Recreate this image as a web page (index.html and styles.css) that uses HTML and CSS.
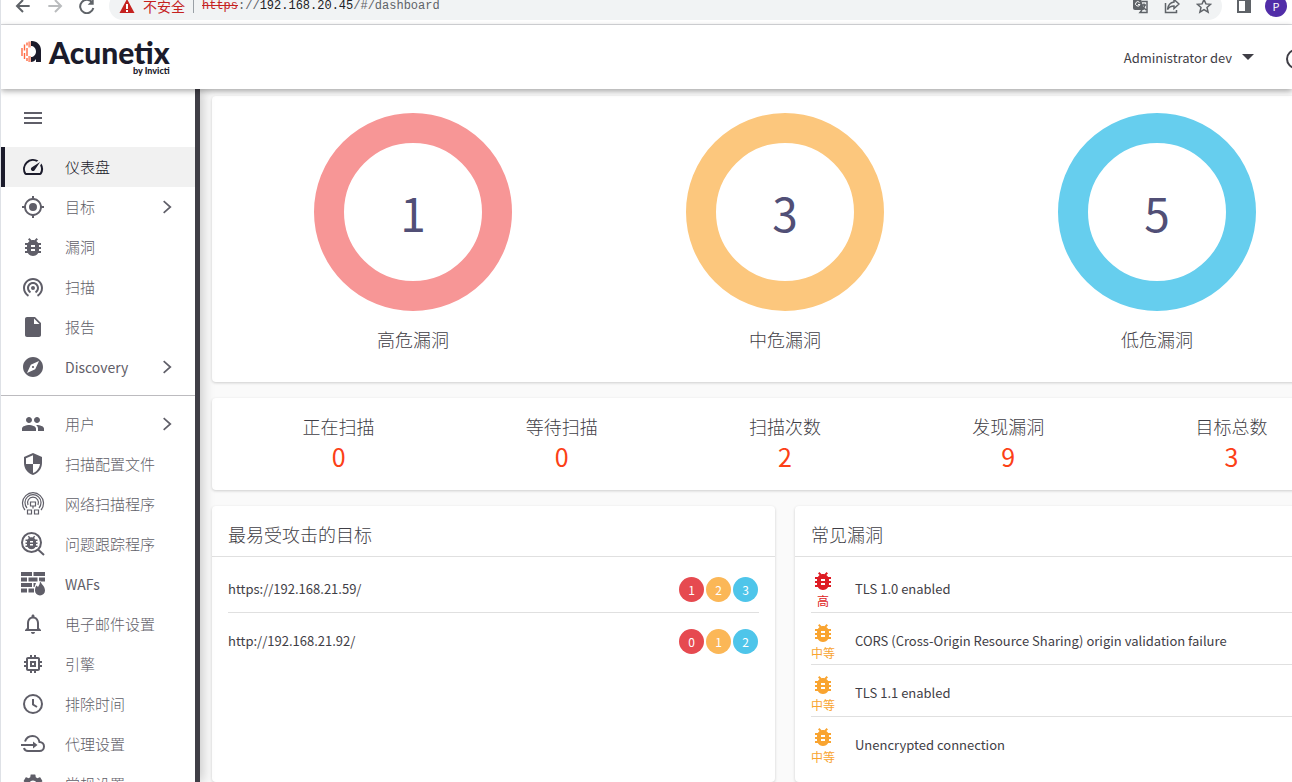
FILE: index.html
```html
<!DOCTYPE html>
<html lang="zh-CN">
<head>
    <meta charset="UTF-8">
    <meta name="viewport" content="width=device-width, initial-scale=1.0">
    <title>Acunetix</title>
    <link rel="stylesheet" href="styles.css">
</head>
<body>
    <!-- Browser toolbar -->
    <div class="browser-bar">
        <button class="browser-button" aria-label="后退"><svg viewBox="0 0 24 24"><path d="M22 12H4M12 3l-9 9 9 9"/></svg></button>
        <button class="browser-button disabled" aria-label="前进"><svg viewBox="0 0 24 24"><path d="M2 12h18M12 3l9 9-9 9"/></svg></button>
        <button class="browser-button" aria-label="刷新"><svg viewBox="0 0 24 24"><path d="M20 7a10 10 0 1 0 1.500 8"/><path class="solid" d="M22 1v9h-9z"/></svg></button>
        <div class="address">
            <svg class="warning" viewBox="0 0 16 16"><path d="M8 1l7.500 14H.5z"/><path class="mark" d="M8 6v5M8 12v2"/></svg>
            <span class="unsafe">不安全</span>
            <span class="url"><s>https</s>://<b>192.168.20.45</b>/#/dashboard</span>
            <button class="address-button" aria-label="翻译"><svg viewBox="0 0 16 16"><path class="solid" d="M1 1h8l3 11H3a2 2 0 0 1-2-2z"/><path d="M9.500 3.500H15v11H8l2-2.500M9.500 7H14M12 5.500V7M13 7c-.5 2-1.500 3-3 4M11 9l3 3"/><path class="letter" d="M7.500 4.500a2.200 2.200 0 1 0 .4 2H6"/></svg></button>
            <button class="address-button" aria-label="分享"><svg viewBox="0 0 16 16"><path d="M1.500 5v9.500h11V12M10 1.500l5 4.500-5 4.500V8c-3 0-5 1-6.500 3.500C4 7.500 6 4.500 10 4z"/></svg></button>
            <button class="address-button" aria-label="收藏"><svg viewBox="0 0 16 16"><path d="M8 1.500l1.900 4.400 4.700.4-3.600 3.100 1.100 4.700L8 11.600l-4.100 2.500L5 9.400 1.400 6.300l4.700-.4z"/></svg></button>
        </div>
        <button class="panel-button" aria-label="侧边栏"><svg viewBox="0 0 16 16"><path d="M2 2h12v12H2z"/><path class="solid" d="M9 2h5v12H9z"/></svg></button>
        <span class="avatar">P</span>
    </div>

    <!-- App header -->
    <header class="header">
        <a class="logo" href="#/dashboard">
            <svg class="logo-mark" viewBox="0 0 20 21">
                <path fill="#1b1b2b" d="M10 0h1c5 0 9 4 9 9v12h-5v-3c-1 2-3 3-5 3v-5c2.500 0 5-2 5-5.500S12.500 5 10 5z"/>
                <path stroke="#ff6a42" stroke-width="1.400" d="M1 7v8M3.500 3.500v6M3.500 12v6M6 1.500v3M6 7v8M6 17v3"/>
                <path stroke="#ff9a80" stroke-width="2.500" d="M8.500 .5v6M8.500 15v6"/>
            </svg>
            <span class="logo-text">
                <span class="logo-name">Acunetix</span>
                <span class="logo-by">by Invicti</span>
            </span>
        </a>
        <button class="user-menu">Administrator dev <span class="caret"></span></button>
        <button class="help" aria-label="帮助"><svg viewBox="0 0 24 24"><circle cx="12" cy="12" r="9"/><path d="M9 10a3 3 0 1 1 3 3v1M12 16v2"/></svg></button>
    </header>

    <div class="app">
        <!-- Sidebar -->
        <nav class="sidebar">
            <button class="menu-toggle" aria-label="菜单"><svg viewBox="0 0 24 24"><path d="M3 18h18v-2H3v2zm0-5h18v-2H3v2zm0-7v2h18V6H3z"/></svg></button>
            <a class="nav-item active" href="#/dashboard">
                <svg viewBox="0 0 24 24"><path d="M20.380 8.570l-1.230 1.850a8 8 0 0 1-.22 7.580H5.070A8 8 0 0 1 15.580 6.850l1.850-1.230A10 10 0 0 0 3.350 19a2 2 0 0 0 1.720 1h13.850a2 2 0 0 0 1.740-1 10 10 0 0 0-.27-10.440zm-9.790 6.840a2 2 0 0 0 2.830 0l5.660-8.490-8.490 5.660a2 2 0 0 0 0 2.830z"/></svg>
                <span>仪表盘</span>
            </a>
            <a class="nav-item" href="#/targets">
                <svg viewBox="0 0 24 24"><path d="M12 8a4 4 0 1 0 0 8 4 4 0 0 0 0-8zm8.940 3A8.994 8.994 0 0 0 13 3.060V1h-2v2.060A8.994 8.994 0 0 0 3.060 11H1v2h2.060A8.994 8.994 0 0 0 11 20.940V23h2v-2.060A8.994 8.994 0 0 0 20.940 13H23v-2h-2.060zM12 19c-3.870 0-7-3.130-7-7s3.130-7 7-7 7 3.130 7 7-3.130 7-7 7z"/></svg>
                <span>目标</span>
                <svg class="chevron" viewBox="0 0 24 24"><path d="M8 5l8 7-8 7"/></svg>
            </a>
            <a class="nav-item" href="#/vulnerabilities">
                <svg viewBox="0 0 24 24"><path id="bug" d="M20 8h-2.810c-.45-.78-1.070-1.450-1.820-1.960L17 4.410 15.590 3l-2.170 2.170C12.960 5.060 12.490 5 12 5s-.96.060-1.410.17L8.410 3 7 4.410l1.620 1.630C7.880 6.550 7.260 7.220 6.810 8H4v2h2.090c-.05.33-.09.66-.09 1v1H4v2h2v1c0 .34.040.67.090 1H4v2h2.810c1.040 1.790 2.970 3 5.190 3s4.150-1.210 5.190-3H20v-2h-2.090c.05-.33.090-.66.090-1v-1h2v-2h-2v-1c0-.34-.04-.67-.09-1H20V8zm-6 8h-4v-2h4v2zm0-4h-4v-2h4v2z"/></svg>
                <span>漏洞</span>
            </a>
            <a class="nav-item" href="#/scans">
                <svg viewBox="0 0 24 24"><path d="M12 11a2 2 0 1 0 0 4 2 2 0 0 0 0-4zm6 2c0-3.310-2.690-6-6-6s-6 2.690-6 6c0 2.220 1.210 4.150 3 5.190l1-1.740c-1.190-.7-2-1.970-2-3.450 0-2.210 1.790-4 4-4s4 1.790 4 4c0 1.480-.81 2.750-2 3.450l1 1.740c1.790-1.040 3-2.970 3-5.190zM12 3C6.480 3 2 7.480 2 13c0 3.700 2.010 6.920 4.990 8.650l1-1.730C5.610 18.530 4 15.960 4 13c0-4.420 3.580-8 8-8s8 3.580 8 8c0 2.960-1.610 5.530-4 6.920l1 1.730c2.990-1.730 5-4.950 5-8.650 0-5.520-4.480-10-10-10z"/></svg>
                <span>扫描</span>
            </a>
            <a class="nav-item" href="#/reports">
                <svg viewBox="0 0 24 24"><path d="M6 2c-1.100 0-1.990.9-1.990 2L4 20c0 1.100.89 2 1.990 2H18c1.100 0 2-.9 2-2V8l-6-6H6zm7 7V3.500L18.500 9H13z"/></svg>
                <span>报告</span>
            </a>
            <a class="nav-item" href="#/discovery">
                <svg viewBox="0 0 24 24"><path d="M12 10.900a1.100 1.100 0 1 0 0 2.200 1.100 1.100 0 0 0 0-2.200zM12 2C6.480 2 2 6.480 2 12s4.480 10 10 10 10-4.480 10-10S17.520 2 12 2zm2.190 12.190L6 18l3.810-8.190L18 6l-3.810 8.190z"/></svg>
                <span class="latin">Discovery</span>
                <svg class="chevron" viewBox="0 0 24 24"><path d="M8 5l8 7-8 7"/></svg>
            </a>
            <hr class="nav-divider">
            <a class="nav-item" href="#/users">
                <svg viewBox="0 0 24 24"><path d="M16 11c1.660 0 2.990-1.340 2.990-3S17.660 5 16 5s-3 1.340-3 3 1.340 3 3 3zm-8 0c1.660 0 2.990-1.340 2.990-3S9.660 5 8 5 5 6.340 5 8s1.340 3 3 3zm0 2c-2.330 0-7 1.170-7 3.500V19h14v-2.500c0-2.330-4.670-3.500-7-3.500zm8 0c-.29 0-.62.020-.97.050 1.160.84 1.970 1.970 1.970 3.450V19h6v-2.500c0-2.330-4.670-3.500-7-3.500z"/></svg>
                <span>用户</span>
                <svg class="chevron" viewBox="0 0 24 24"><path d="M8 5l8 7-8 7"/></svg>
            </a>
            <a class="nav-item" href="#/profiles">
                <svg viewBox="0 0 24 24"><path d="M12 1L3 5v6c0 5.550 3.840 10.740 9 12 5.160-1.260 9-6.450 9-12V5l-9-4zm0 10.990h7c-.53 4.120-3.280 7.790-7 8.940V12H5V6.300l7-3.110v8.800z"/></svg>
                <span>扫描配置文件</span>
            </a>
            <a class="nav-item" href="#/network-scanner">
                <svg class="outline" viewBox="0 0 24 24"><path d="M4 18A10.500 10.500 0 1 1 20 18M6 16a8 8 0 1 1 12 0"/><path d="M7 13a5.500 5.500 0 1 1 10 0"/><path d="M9.500 10h5v4h-5zM12 14v2.500M6.500 18h4v4h-4zM13.500 18h4v4h-4z"/></svg>
                <span>网络扫描程序</span>
            </a>
            <a class="nav-item" href="#/issue-trackers">
                <svg viewBox="0 0 24 24"><path class="ring" d="M10.500 1a9.500 9.500 0 1 1 0 19 9.500 9.500 0 0 1 0-19M17 17.500l6 5.500"/><use href="#bug" transform="translate(1.500 1.500) scale(.75)"/></svg>
                <span>问题跟踪程序</span>
            </a>
            <a class="nav-item" href="#/wafs">
                <svg viewBox="0 0 24 24"><path d="M0 0h11v4H0zM12.500 0H24v4H12.500zM0 5.500h6v4H0zM7.500 5.500h9v4h-9zM18 5.500h6v4h-4l-1-1-1 1zM0 11h11v4H0zM12.500 11H15l-1.500 4h-1zM0 16.500h6v4H0zM7.500 16.500H13v4H7.500z"/><path d="M19 9c1 3 5 5 5 9.500a5 5 0 0 1-10 0c0-2 .5-4 1.500-5l1.500 1.500c1-2 2-3 2-6z"/></svg>
                <span class="latin">WAFs</span>
            </a>
            <a class="nav-item" href="#/email">
                <svg viewBox="0 0 24 24"><path d="M12 22c1.100 0 2-.9 2-2h-4c0 1.100.89 2 2 2zm6-6v-5c0-3.070-1.630-5.640-4.500-6.320V4c0-.83-.67-1.500-1.500-1.500s-1.500.67-1.500 1.500v.68C7.640 5.360 6 7.920 6 11v5l-2 2v1h16v-1l-2-2zm-2 1H8v-6c0-2.480 1.510-4.500 4-4.500s4 2.020 4 4.500v6z"/></svg>
                <span>电子邮件设置</span>
            </a>
            <a class="nav-item" href="#/engines">
                <svg viewBox="0 0 24 24"><path d="M15 9H9v6h6V9zm-2 4h-2v-2h2v2zm8-2V9h-2V7c0-1.100-.9-2-2-2h-2V3h-2v2h-2V3H9v2H7c-1.100 0-2 .9-2 2v2H3v2h2v2H3v2h2v2c0 1.100.9 2 2 2h2v2h2v-2h2v2h2v-2h2c1.100 0 2-.9 2-2v-2h2v-2h-2v-2h2zm-4 6H7V7h10v10z"/></svg>
                <span>引擎</span>
            </a>
            <a class="nav-item" href="#/excluded-hours">
                <svg class="outline clock" viewBox="0 0 24 24"><circle cx="12" cy="12" r="9"/><path d="M12 7v5.500l4 2.500"/></svg>
                <span>排除时间</span>
            </a>
            <a class="nav-item" href="#/proxy">
                <svg class="outline proxy" viewBox="0 0 24 24"><path d="M4 9.500C5 6.500 8 4 11.500 4c3.500 0 6.500 2.500 7 6 2.500 0 4.500 2 4.500 4.500S21 19 18.500 19H7c-2 0-3.500-1-4-3"/><path d="M0 13h14"/><path class="solid" d="M12 9.500l4.500 3.500-4.500 3.500z"/></svg>
                <span>代理设置</span>
            </a>
            <a class="nav-item" href="#/settings">
                <svg viewBox="0 0 24 24"><path d="M19.140 12.940c.04-.3.060-.61.060-.94 0-.32-.02-.64-.07-.94l2.030-1.580a.49.49 0 0 0 .12-.61l-1.920-3.320a.488.488 0 0 0-.59-.22l-2.390.96c-.5-.38-1.030-.7-1.620-.94l-.36-2.540a.484.484 0 0 0-.48-.41h-3.840c-.24 0-.43.17-.47.41l-.36 2.540c-.59.24-1.130.57-1.620.94l-2.390-.96c-.22-.08-.47 0-.59.22L2.740 8.870c-.12.21-.08.47.12.61l2.030 1.580c-.05.3-.09.63-.09.94s.02.64.07.94l-2.030 1.580a.49.49 0 0 0-.12.61l1.920 3.320c.12.22.37.29.59.22l2.390-.96c.5.38 1.030.7 1.620.94l.36 2.540c.05.24.24.41.48.41h3.840c.24 0 .44-.17.47-.41l.36-2.540c.59-.24 1.130-.56 1.620-.94l2.390.96c.22.08.47 0 .59-.22l1.920-3.320c.12-.22.07-.47-.12-.61l-2.010-1.580zM12 15.600a3.600 3.600 0 1 1 0-7.200 3.600 3.600 0 0 1 0 7.200z"/></svg>
                <span>常规设置</span>
            </a>
        </nav>

        <!-- Dashboard -->
        <main class="content">
            <section class="card severities">
                <div class="severity"><div class="donut donut-high">1</div>高危漏洞</div>
                <div class="severity"><div class="donut donut-medium">3</div>中危漏洞</div>
                <div class="severity"><div class="donut donut-low">5</div>低危漏洞</div>
            </section>

            <section class="card stats">
                <div class="stat">正在扫描<span class="stat-value">0</span></div>
                <div class="stat">等待扫描<span class="stat-value">0</span></div>
                <div class="stat">扫描次数<span class="stat-value">2</span></div>
                <div class="stat">发现漏洞<span class="stat-value">9</span></div>
                <div class="stat">目标总数<span class="stat-value">3</span></div>
            </section>

            <div class="lists">
                <section class="card">
                    <h2>最易受攻击的目标</h2>
                    <ul class="list">
                        <li>
                            <span>https://192.168.21.59/</span>
                            <span class="badges"><span class="badge high">1</span><span class="badge medium">2</span><span class="badge low">3</span></span>
                        </li>
                        <li>
                            <span>http://192.168.21.92/</span>
                            <span class="badges"><span class="badge high">0</span><span class="badge medium">1</span><span class="badge low">2</span></span>
                        </li>
                    </ul>
                </section>
                <section class="card">
                    <h2>常见漏洞</h2>
                    <ul class="list">
                        <li>
                            <span class="level level-high"><svg viewBox="0 0 24 24"><use href="#bug"/></svg>高</span>
                            <span>TLS 1.0 enabled</span>
                        </li>
                        <li>
                            <span class="level level-medium"><svg viewBox="0 0 24 24"><use href="#bug"/></svg>中等</span>
                            <span>CORS (Cross-Origin Resource Sharing) origin validation failure</span>
                        </li>
                        <li>
                            <span class="level level-medium"><svg viewBox="0 0 24 24"><use href="#bug"/></svg>中等</span>
                            <span>TLS 1.1 enabled</span>
                        </li>
                        <li>
                            <span class="level level-medium"><svg viewBox="0 0 24 24"><use href="#bug"/></svg>中等</span>
                            <span>Unencrypted connection</span>
                        </li>
                    </ul>
                </section>
            </div>
        </main>
    </div>
</body>
</html>
```
FILE: styles.css
```css
* {
    box-sizing: border-box;
}
body {
    margin: 0;
    height: 100vh;
    display: flex;
    flex-direction: column;
    overflow: hidden;
    border-left: 1px solid #dee1e6;
    background-color: #fafafa;
    color: #3f3e46;
    font-family: "Noto Sans CJK SC", sans-serif;
    font-size: 13px;
}
button {
    padding: 0;
    border: none;
    background: none;
    color: inherit;
    font: inherit;
    cursor: pointer;
}
a {
    color: inherit;
    text-decoration: none;
}
svg {
    display: block;
    flex-shrink: 0;
    fill: currentColor;
}

/* Browser toolbar */
.browser-bar {
    height: 25px;
    flex-shrink: 0;
    display: flex;
    align-items: flex-end;
    padding: 0 5px 4px 14px;
    border-bottom: 1px solid #dcdde0;
    background-color: #fff;
    color: #5f6368;
}
.browser-bar svg {
    width: 16px;
    height: 16px;
    fill: none;
    stroke: currentColor;
    stroke-width: 2;
}
.browser-bar .solid {
    fill: currentColor;
    stroke: none;
}
.browser-button {
    width: 16px;
    height: 28px;
    margin-right: 16px;
}
.browser-button svg {
    stroke-width: 3;
}
.browser-button.disabled {
    color: #babcbe;
}
.address {
    flex: 1;
    height: 28px;
    display: flex;
    align-items: center;
    padding: 0 10px;
    margin-left: -2px;
    border-radius: 14px;
    background-color: #f1f3f4;
}
.browser-bar .warning {
    fill: #c5221f;
    stroke: none;
}
.browser-bar .warning .mark {
    stroke: #fff;
}
.unsafe {
    margin-left: 8px;
    padding-right: 8px;
    border-right: 1px solid #9aa0a6;
    color: #c5221f;
    font-size: 14px;
    line-height: 14px;
}
.url {
    flex: 1;
    margin-left: 8px;
    font-family: "Liberation Mono", monospace;
    font-size: 12px;
    line-height: 16px;
}
.url s {
    color: #c5221f;
}
.url b {
    color: #202124;
    font-weight: normal;
}
.address-button {
    margin-left: 16px;
}
.browser-bar .address-button svg {
    stroke-width: 1.5;
}
.browser-bar .letter {
    stroke: #fff;
    stroke-width: 1;
}
.panel-button {
    height: 28px;
    margin-left: 14px;
}
.avatar {
    width: 22px;
    height: 22px;
    margin: 0 0 3px 13px;
    border-radius: 50%;
    background-color: #512da8;
    color: #fff;
    font-size: 11px;
    line-height: 22px;
    text-align: center;
}

/* App header */
.header {
    position: relative;
    z-index: 2;
    height: 64px;
    flex-shrink: 0;
    display: flex;
    align-items: center;
    padding-left: 20px;
    overflow-x: clip;
    background-color: #fff;
    box-shadow: 0 2px 6px rgba(0, 0, 0, 0.35);
}
.logo {
    display: flex;
    gap: 8px;
    margin-right: auto;
    color: #1b1b2b;
    font-family: Lato, sans-serif;
    font-weight: 900;
}
.logo-mark {
    width: 20px;
    height: 21px;
    margin-top: 3px;
}
.logo-text {
    display: flex;
    flex-direction: column;
}
.logo-name {
    font-size: 30px;
    line-height: 28px;
}
.logo-by {
    font-size: 9px;
    line-height: 10px;
    text-align: right;
}
.user-menu {
    display: flex;
    align-items: center;
    gap: 10px;
}
.caret {
    border: 6px solid transparent;
    border-top-color: #3f3e46;
    border-bottom: none;
}
.help {
    width: 24px;
    margin: 4px -16px 0 30px;
}
.help svg {
    width: 24px;
    fill: none;
    stroke: currentColor;
    stroke-width: 2;
}

/* Sidebar */
.app {
    flex: 1;
    min-height: 0;
    display: flex;
    overflow: hidden;
}
.sidebar {
    position: relative;
    z-index: 1;
    width: 199px;
    flex-shrink: 0;
    overflow: hidden;
    border-right: 5px solid #3f3e46;
    background-color: #fff;
    box-shadow: 2px 0 12px rgba(0, 0, 0, 0.22);
    color: #5f5e68;
    font-size: 14px;
}
.sidebar svg {
    width: 24px;
    height: 24px;
}
.menu-toggle {
    height: 58px;
    padding-left: 20px;
    display: flex;
    align-items: center;
}
.nav-item {
    height: 40px;
    display: flex;
    align-items: center;
    padding: 0 16px 0 20px;
}
.nav-item span {
    flex: 1;
    margin-left: 20px;
    font-size: 15px;
    font-weight: 300;
    line-height: 20px;
}
.nav-item .latin {
    font-size: 14px;
    font-weight: 400;
}
.nav-item.active {
    padding-left: 16px;
    border-left: 4px solid #1b1b2b;
    background-color: #f1f1f1;
    color: #1b1b2b;
}
.sidebar .outline,
.sidebar .chevron,
.sidebar .ring {
    fill: none;
    stroke: currentColor;
    stroke-width: 1.2;
}
.sidebar .clock,
.sidebar .proxy,
.sidebar .ring {
    stroke-width: 2;
}
.sidebar .solid {
    fill: currentColor;
    stroke: none;
}
.sidebar .chevron {
    width: 24px;
    height: 20px;
}
.sidebar .chevron path {
    stroke-width: 2;
}
.nav-divider {
    margin: 8px 0;
    border: none;
    border-top: 1px solid #bcbbbf;
}

/* Dashboard: wide layout, clipped by narrow windows */
.content {
    flex: 1 0 auto;
    min-width: 1170px;
    display: flex;
    flex-direction: column;
    gap: 16px;
    padding: 7px 12px 0;
}
.card {
    border-radius: 4px;
    background-color: #fff;
    box-shadow: 0 1px 3px rgba(0, 0, 0, 0.18);
}
.severities,
.stats {
    display: flex;
    padding: 17px 15px;
    font-size: 18px;
    font-weight: 300;
    text-align: center;
}
.severities {
    padding-bottom: 29px;
}
.severity,
.stat {
    flex: 1;
    line-height: 28px;
}
.donut {
    width: 198px;
    height: 198px;
    display: flex;
    align-items: center;
    justify-content: center;
    margin: 0 auto 14px;
    border: 30px solid;
    border-radius: 50%;
    font-size: 46px;
    font-weight: 400;
}
.donut-high {
    border-color: #f79696;
}
.donut-medium {
    border-color: #fcc77d;
}
.donut-low {
    border-color: #66ceee;
}
.donut {
    color: #514f76;
}
.stats {
    padding-top: 14px;
    padding-bottom: 18px;
}
.stat-value {
    display: block;
    color: #fc4016;
    font-size: 25px;
    font-weight: 400;
    line-height: 32px;
}
.lists {
    flex: 1;
    display: grid;
    grid-template-columns: 1fr 1fr;
    gap: 20px;
}
h2 {
    margin: 0;
    padding: 14px 16px 8px;
    border-bottom: 1px solid #e0e0e0;
    font-size: 18px;
    font-weight: 300;
    line-height: 28px;
}
.list {
    margin: 0;
    padding: 4px 16px;
    list-style: none;
}
.list li {
    height: 52px;
    display: flex;
    align-items: center;
    padding-top: 4px;
    border-bottom: 1px solid #e0e0e0;
}
.list li:last-child {
    border-bottom-color: transparent;
}
.badges {
    display: flex;
    gap: 2px;
    margin-left: auto;
    padding: 1px 1px 0 0;
}
.badge {
    width: 25px;
    height: 25px;
    border-radius: 50%;
    color: #fff;
    font-size: 12px;
    line-height: 25px;
    text-align: center;
}
.high {
    background-color: #e64a50;
}
.medium {
    background-color: #fbb757;
}
.low {
    background-color: #4ec5ea;
}
.level {
    width: 24px;
    display: flex;
    flex-direction: column;
    align-items: center;
    margin-right: 20px;
    font-size: 12px;
    line-height: 16px;
}
.level svg {
    width: 24px;
    height: 24px;
}
.level-high {
    color: #de1c24;
}
.level-medium {
    color: #f9a430;
}
```
